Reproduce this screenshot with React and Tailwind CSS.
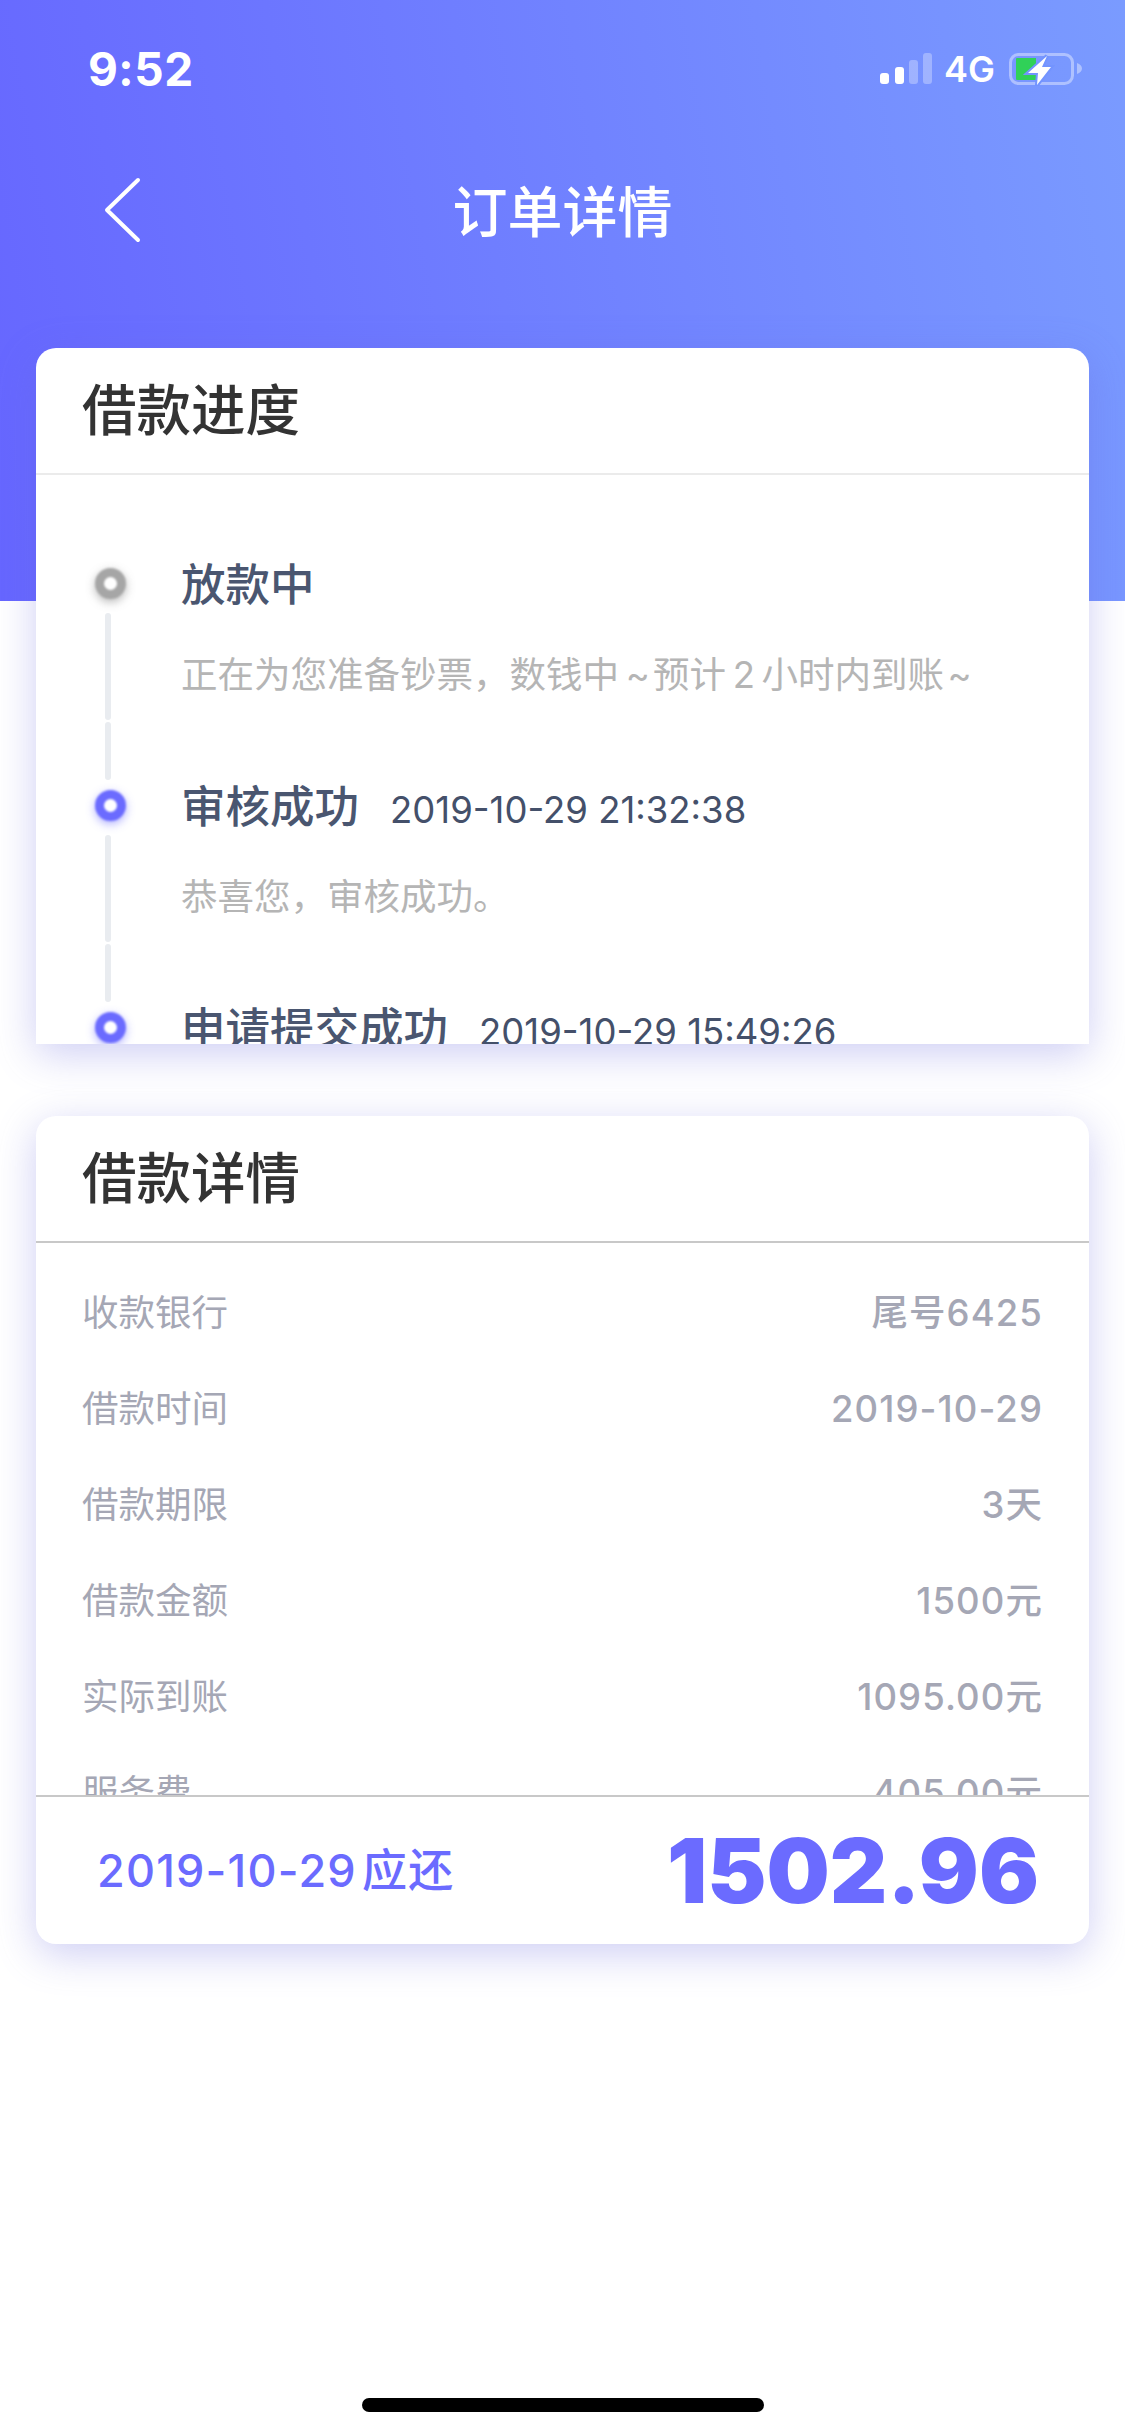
const fontStack = "font-['Inter','Noto_Sans_CJK_SC',sans-serif]"

function StatusBar() {
  return (
    <div className="flex items-center h-[110px] pl-[88px] pr-[43px] pt-[28px] text-white">
      <span className="text-[46px] leading-[56px] font-bold tracking-[0.5px]">9:52</span>
      <div className="ml-auto flex items-center">
        <svg width="52" height="32" viewBox="0 0 52 32">
          <rect x="0" y="20" width="9" height="11" rx="3" fill="#fff" />
          <rect x="15" y="14" width="9" height="17" rx="3" fill="#fff" />
          <rect x="29" y="7" width="9" height="24" rx="3" fill="#fff" fillOpacity="0.3" />
          <rect x="43" y="0" width="9" height="31" rx="3" fill="#fff" fillOpacity="0.3" />
        </svg>
        <span className="ml-[12px] text-[36px] leading-[40px] font-semibold">4G</span>
        <svg width="75" height="34" viewBox="0 0 75 34" className="ml-[12px]">
          <rect x="3.500" y="2.500" width="62" height="29" rx="8" fill="none" stroke="#fff" strokeOpacity="0.4" strokeWidth="3" />
          <path d="M70 11c3 1 5 3 5 5.500s-2 4.500-5 5.500z" fill="#fff" fillOpacity="0.4" />
          <path d="M10 6h19v22H10a1 1 0 0 1-1-1V7a1 1 0 0 1 1-1z" fill="#30d158" />
          <path d="M40 4L21 21h10l-1 12 14-18h-9z" fill="#7394ff" stroke="#7394ff" strokeWidth="4" />
          <path d="M40 4L21 21h10l-1 12 14-18h-9z" fill="#fff" />
        </svg>
      </div>
    </div>
  )
}

function NavBar() {
  return (
    <div className="relative flex items-center justify-center h-[100px]">
      <svg width="40" height="66" viewBox="0 0 40 66" className="absolute left-[102px] top-[15px]">
        <path d="M36 3L5 33l31 30" fill="none" stroke="#fff" strokeWidth="4" strokeLinecap="round" strokeLinejoin="round" />
      </svg>
      <h1 className="text-[55px] leading-[70px] font-medium text-white">订单详情</h1>
    </div>
  )
}

function CardTitle({ children, border }) {
  return (
    <div className={`h-[127px] flex items-center px-[46px] pb-[2px] border-b-2 ${border}`}>
      <h2 className="text-[54.5px] leading-[70px] font-medium text-[#333333]">{children}</h2>
    </div>
  )
}

function Step({ title, date, desc, color, halo }) {
  return (
    <div className="flex h-[222px]">
      <div className="w-[30px] ml-[59px] shrink-0 flex flex-col items-center">
        <div className="h-[50px] flex items-center">
          <div className={`w-[31px] h-[31px] rounded-full border-[9px] bg-white blur-[1px] ${color} ${halo}`}></div>
        </div>
        <div className="w-[6px] h-[107px] mt-[5px] mr-[4px] rounded-full bg-[#e9ecf0]"></div>
        <div className="w-[6px] h-[58px] mt-[2px] mr-[4px] rounded-full bg-[#e9ecf0]"></div>
      </div>
      <div className="ml-[56px] pt-[2px]">
        <div className="flex items-baseline h-[50px] whitespace-nowrap">
          <span className="text-[44.5px] leading-[50px] font-medium text-[#4a5670]">{title}</span>
          {date && <span className="ml-[31px] text-[36.5px] leading-[50px] text-[#44506a]">{date}</span>}
        </div>
        <p className="mt-[40px] text-[36.5px] leading-[50px] text-[#b5b5b5] whitespace-nowrap">{desc}</p>
      </div>
    </div>
  )
}

function Row({ label, value }) {
  return (
    <div className="flex items-center justify-between h-[96px] shrink-0 text-[36.5px] text-[#a5a7b5]">
      <span>{label}</span>
      <span className="font-medium tracking-[1.1px]">{value}</span>
    </div>
  )
}

export default function App() {
  const rows = [
    ['收款银行', '尾号6425'],
    ['借款时间', '2019-10-29'],
    ['借款期限', '3天'],
    ['借款金额', '1500元'],
    ['实际到账', '1095.00元'],
    ['服务费', '405.00元'],
  ]
  return (
    <div className={`w-[1125px] h-[2436px] bg-white overflow-hidden flex flex-col ${fontStack}`}>
      <header className="h-[601px] shrink-0 bg-[linear-gradient(80deg,#6666ff,#7a9bff)]">
        <StatusBar />
        <div className="pt-[52px]">
          <NavBar />
        </div>
      </header>

      <main className="mt-[-253px] px-[36px] flex flex-col gap-[72px]">
        <section className="h-[696px] bg-white rounded-t-[20px] overflow-hidden shadow-[0_10px_40px_rgba(102,102,220,0.32)]">
          <CardTitle border="border-[#ebebeb]">借款进度</CardTitle>
          <div className="h-[569px] overflow-hidden pt-[83px]">
            <Step title="放款中" desc={'正在为您准备钞票，数钱中\u2009~\u200a预计\u20092\u2009小时内到账\u200a~'} color="border-[#a6a6a6]" halo="shadow-[0_3px_8px_rgba(120,120,120,0.5)]" />
            <Step title="审核成功" date="2019-10-29 21:32:38" desc="恭喜您，审核成功。" color="border-[#6b6bff]" halo="shadow-[0_3px_8px_rgba(102,102,255,0.5)]" />
            <Step title="申请提交成功" date="2019-10-29 15:49:26" desc="" color="border-[#6b6bff]" halo="shadow-[0_3px_8px_rgba(102,102,255,0.5)]" />
          </div>
        </section>

        <section className="h-[828px] bg-white rounded-[20px] overflow-hidden flex flex-col shadow-[0_10px_40px_rgba(102,102,220,0.32)]">
          <CardTitle border="border-[#c8c8c8]">借款详情</CardTitle>
          <div className="flex-1 min-h-0 overflow-hidden pt-[22px] px-[46px] flex flex-col">
            {rows.map(([label, value]) => (
              <Row key={label} label={label} value={value} />
            ))}
          </div>
          <div className="h-[149px] shrink-0 border-t-2 border-[#c8c8c8] flex items-center justify-between pl-[61px] pr-[50px] text-[#6b6bff]">
            <span className="text-[45px] font-medium tracking-[1.2px]">{'2019-10-29\u200a应还'}</span>
            <span className="text-[89px] leading-[100px] font-black">1502.96</span>
          </div>
        </section>
      </main>

      <div className="mt-auto mb-[24px] mx-auto w-[402px] h-[14px] rounded-full bg-black"></div>
    </div>
  )
}
